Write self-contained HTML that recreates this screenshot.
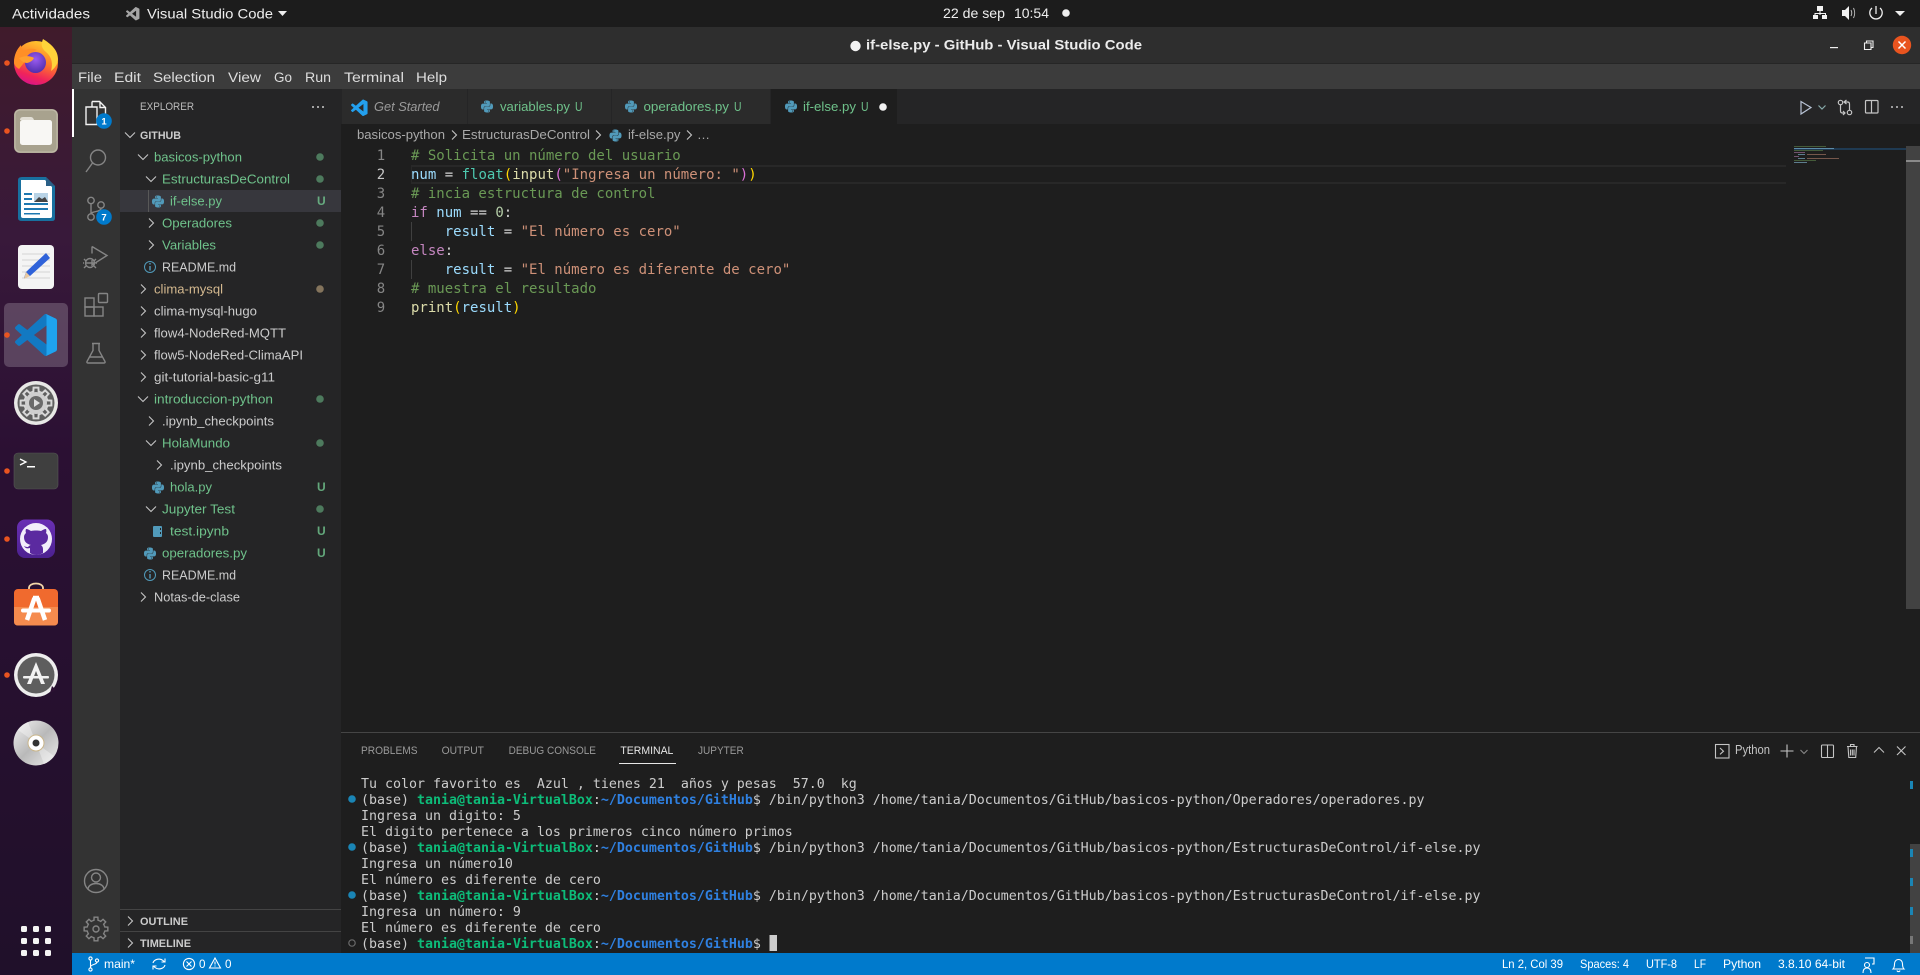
<!DOCTYPE html>
<html lang="es">
<head>
<meta charset="utf-8">
<title>if-else.py - GitHub - Visual Studio Code</title>
<style>
html,body{margin:0;padding:0;background:#1e1e1e;width:1920px;height:975px;overflow:hidden}
svg{display:block}
text{white-space:pre;font-family:"Liberation Sans",sans-serif}
.top{font-size:14px;fill:#eee}
.menu{font-size:13.5px;fill:#ddd}
.side{font-size:13px;fill:#ccc;transform:translateY(.6px)}
.g{fill:#6fc28b}
.m{fill:#d4b98f}
.hd{font-size:11px;font-weight:bold;fill:#ccc}
.u{font-size:12px;font-weight:bold;fill:#73c991;opacity:.8}
.tab{font-size:13px;fill:#6fc28b}
.bc{font-size:13px;fill:#a9a9a9}
.code{font-family:"DejaVu Sans Mono","Liberation Mono",monospace;font-size:14px;fill:#d4d4d4}
.ln{font-family:"DejaVu Sans Mono","Liberation Mono",monospace;font-size:14px;fill:#858585;text-anchor:middle}
.term{font-family:"DejaVu Sans Mono","Liberation Mono",monospace;font-size:13.29px;fill:#ccc}
.tg{font-weight:bold;fill:#0dbc79}
.tb{font-weight:bold;fill:#2f80e0}
.pt{font-size:11px;fill:#9a9a9a}
.st{font-size:12px;fill:#fff}
.ic{fill:none;stroke:#858585;stroke-width:1.4}
</style>
</head>
<body>
<svg xmlns="http://www.w3.org/2000/svg" width="1920" height="975" viewBox="0 0 1920 975">
<defs>
<linearGradient id="dock" x1="0" y1="0" x2="0" y2="1">
<stop offset="0" stop-color="#401b2b"/><stop offset=".22" stop-color="#38193a"/><stop offset=".45" stop-color="#2b1033"/><stop offset="1" stop-color="#20102a"/>
</linearGradient>
<linearGradient id="ffo" x1=".7" y1="0" x2=".35" y2="1"><stop offset="0" stop-color="#ffcf2e"/><stop offset=".45" stop-color="#ff7a2a"/><stop offset=".8" stop-color="#f0245a"/><stop offset="1" stop-color="#d9148a"/></linearGradient>
<radialGradient id="ffp" cx=".5" cy=".35" r=".7"><stop offset="0" stop-color="#9a5cf0"/><stop offset="1" stop-color="#4b2aa8"/></radialGradient>
<linearGradient id="ghb" x1="0" y1="0" x2="0" y2="1"><stop offset="0" stop-color="#6a2fb5"/><stop offset="1" stop-color="#4c2190"/></linearGradient>
<linearGradient id="cd" x1="0" y1="0" x2="1" y2="1"><stop offset="0" stop-color="#f2f2f2"/><stop offset=".5" stop-color="#b9b9b9"/><stop offset="1" stop-color="#eee"/></linearGradient>
<symbol id="cr" viewBox="0 0 10 12" width="10" height="12" overflow="visible"><path d="M3 1.5L7.5 6 3 10.5" fill="none" stroke="#c5c5c5" stroke-width="1.1"/></symbol>
<symbol id="cd2" viewBox="0 0 12 10" width="12" height="10" overflow="visible"><path d="M1 2.5L6 7.5 11 2.5" fill="none" stroke="#c5c5c5" stroke-width="1.1"/></symbol>
<symbol id="py" viewBox="0 0 24 24" width="12" height="13" overflow="visible"><path fill="#519aba" fill-rule="evenodd" d="M14.25.18l.9.2.73.26.59.3.45.32.34.34.25.34.16.33.1.3.04.26.02.2-.01.13V8.5l-.05.63-.13.55-.21.46-.26.38-.3.31-.33.25-.35.19-.35.14-.33.1-.3.07-.26.04-.21.02H8.77l-.69.05-.59.14-.5.22-.41.27-.33.32-.27.35-.2.36-.15.37-.1.35-.07.32-.04.27-.02.21v3.06H3.17l-.21-.03-.28-.07-.32-.12-.35-.18-.36-.26-.36-.36-.35-.46-.32-.59-.28-.73-.21-.88-.14-1.05-.05-1.23.06-1.22.16-1.04.24-.87.32-.71.36-.57.4-.44.42-.33.42-.24.4-.16.36-.1.32-.05.24-.01h.16l.06.01h8.16v-.83H6.18l-.01-2.75-.02-.37.05-.34.11-.31.17-.28.25-.26.31-.23.38-.2.44-.18.51-.15.58-.12.64-.1.71-.06.77-.04.84-.02 1.27.05zm-6.3 1.98l-.23.33-.08.41.08.41.23.34.33.22.41.09.41-.09.33-.22.23-.34.08-.41-.08-.41-.23-.33-.33-.22-.41-.09-.41.09zm13.09 3.95l.28.06.32.12.35.18.36.27.36.35.35.47.32.59.28.73.21.88.14 1.04.05 1.23-.06 1.23-.16 1.04-.24.86-.32.71-.36.57-.4.45-.42.33-.42.24-.4.16-.36.09-.32.05-.24.02-.16-.01h-8.22v.82h5.84l.01 2.76.02.36-.05.34-.11.31-.17.29-.25.25-.31.24-.38.2-.44.17-.51.15-.58.13-.64.09-.71.07-.77.04-.84.01-1.27-.04-1.07-.14-.9-.2-.73-.25-.59-.3-.45-.33-.34-.34-.25-.34-.16-.33-.1-.3-.04-.25-.02-.2.01-.13v-5.34l.05-.64.13-.54.21-.46.26-.38.3-.32.33-.24.35-.2.35-.14.33-.1.3-.06.26-.04.21-.02.13-.01h5.84l.69-.05.59-.14.5-.21.41-.28.33-.32.27-.35.2-.36.15-.36.1-.35.07-.32.04-.28.02-.21V6.07h2.09l.14.01zm-6.47 14.25l-.23.33-.08.41.08.41.23.33.33.23.41.08.41-.08.33-.23.23-.33.08-.41-.08-.41-.23-.33-.33-.23-.41-.08-.41.08z"/></symbol>
<path id="tooth" d="M-3.44-8.31L-2.02-8.77-1.88-11.85 1.88-11.85 2.02-8.77 3.44-8.31"/>
<g id="gear"><use href="#tooth"/><use href="#tooth" transform="rotate(45)"/><use href="#tooth" transform="rotate(90)"/><use href="#tooth" transform="rotate(135)"/><use href="#tooth" transform="rotate(180)"/><use href="#tooth" transform="rotate(225)"/><use href="#tooth" transform="rotate(270)"/><use href="#tooth" transform="rotate(315)"/></g>
<path id="vs" d="M23.15 2.587L18.21.21a1.494 1.494 0 0 0-1.705.29l-9.46 8.63-4.12-3.128a.999.999 0 0 0-1.276.057L.327 7.261A1 1 0 0 0 .326 8.74L3.899 12 .326 15.26a1 1 0 0 0 .001 1.479L1.65 17.94a.999.999 0 0 0 1.276.057l4.12-3.128 9.46 8.63a1.492 1.492 0 0 0 1.704.29l4.942-2.377A1.5 1.5 0 0 0 24 20.06V3.939a1.5 1.5 0 0 0-.85-1.352zm-5.146 14.861L10.826 12l7.178-5.448v10.896z"/>
</defs>

<!-- backgrounds -->
<rect width="1920" height="975" fill="#1e1e1e"/>
<rect x="0" y="0" width="1920" height="27" fill="#1c1c1c"/>
<rect x="0" y="27" width="72" height="948" fill="url(#dock)"/>
<rect x="72" y="27" width="1848" height="37" fill="#2e2e2e"/>
<rect x="72" y="63" width="1848" height="1" fill="#262626"/>
<rect x="72" y="64" width="1848" height="25" fill="#3c3c3c"/>
<rect x="72" y="89" width="48" height="864" fill="#333"/>
<rect x="120" y="89" width="221" height="864" fill="#252526"/>
<rect x="341" y="89" width="1579" height="35" fill="#252526"/>

<!-- top bar -->
<text class="top" x="12" y="18.500" textLength="78" lengthAdjust="spacingAndGlyphs">Actividades</text>
<use href="#vs" transform="translate(126 7) scale(.56)" fill="#a5a5a5"/>
<text class="top" x="147" y="18.500" textLength="126" lengthAdjust="spacingAndGlyphs">Visual Studio Code</text>
<path d="M278 11h9l-4.500 5z" fill="#eee"/>
<text class="top" x="943" y="18" textLength="62" lengthAdjust="spacingAndGlyphs">22 de sep</text>
<text class="top" x="1014" y="18" textLength="35" lengthAdjust="spacingAndGlyphs">10:54</text>
<circle cx="1066" cy="13" r="3.800" fill="#eee"/>
<g fill="#f2f2f2">
<rect x="1817" y="6" width="6" height="5"/><rect x="1813" y="15" width="5" height="4"/><rect x="1822" y="15" width="5" height="4"/>
<path d="M1819.500 11h1v2h5.500v2h-1v-1h-4.500v1h-1v-1h-4v1h-1v-2h5z"/>
<path d="M1842 10h3l4-4v14l-4-4h-3z"/>
</g>
<path d="M1851 10c1 2 1 4 0 6M1853.500 8c1.500 3 1.500 7 0 10" fill="none" stroke="#bbb" stroke-width="1"/>
<path d="M1872 8a6.200 6.200 0 1 0 8 0M1876 6v8" fill="none" stroke="#eee" stroke-width="1.300"/>
<path d="M1895 11h10l-5 5z" fill="#eee"/>

<!-- title bar -->
<circle cx="855.500" cy="46" r="5.200" fill="#f2f2f2"/>
<text x="866" y="49.500" font-size="14" font-weight="bold" fill="#ececec" textLength="276" lengthAdjust="spacingAndGlyphs">if-else.py - GitHub - Visual Studio Code</text>
<rect x="1830" y="47" width="8" height="1.200" fill="#eee"/>
<path d="M1864.500 43h6.500v6.500h-6.500z M1866.500 43v-2h6.500v6.500h-2" fill="none" stroke="#eee" stroke-width="1.100"/>
<circle cx="1902" cy="45" r="9.200" fill="#e9541f"/>
<path d="M1898.500 41.500l7 7M1905.500 41.500l-7 7" stroke="#fff" stroke-width="1.500"/>

<!-- menu -->
<text class="menu" x="78" y="82" textLength="24" lengthAdjust="spacingAndGlyphs">File</text>
<text class="menu" x="114" y="82" textLength="27" lengthAdjust="spacingAndGlyphs">Edit</text>
<text class="menu" x="153" y="82" textLength="62" lengthAdjust="spacingAndGlyphs">Selection</text>
<text class="menu" x="228" y="82" textLength="33" lengthAdjust="spacingAndGlyphs">View</text>
<text class="menu" x="274" y="82" textLength="18" lengthAdjust="spacingAndGlyphs">Go</text>
<text class="menu" x="305" y="82" textLength="26" lengthAdjust="spacingAndGlyphs">Run</text>
<text class="menu" x="344" y="82" textLength="60" lengthAdjust="spacingAndGlyphs">Terminal</text>
<text class="menu" x="416" y="82" textLength="31" lengthAdjust="spacingAndGlyphs">Help</text>

<!-- dock -->
<rect x="4" y="303" width="64" height="64" rx="5" fill="#fff" opacity=".2"/>
<g fill="#e95420">
<circle cx="7" cy="63" r="2.800"/><circle cx="7" cy="131" r="2.800"/><circle cx="7" cy="335" r="2.800"/><circle cx="7" cy="471" r="2.800"/><circle cx="7" cy="539" r="2.800"/><circle cx="7" cy="675" r="2.800"/>
</g>
<!-- firefox -->
<circle cx="36" cy="63" r="22" fill="url(#ffo)"/>
<path d="M43 39c-2 5-2 9 3 13 6 5 7 12 5 19 4-3 7-7 7-12 0-9-7-15-15-20z" fill="#ffd33a"/>
<path d="M14 62c0-7 3-13 7-17 0 3 1 5 3 6 4-3 9-3 13-1-5 2-9 4-10 9l-8 10c-3-2-5-4-5-7z" fill="#ff8f26"/>
<circle cx="35.500" cy="62.500" r="10.500" fill="url(#ffp)"/>
<path d="M19 58c5-2 10-3 15 0-1 2-3 4-7 5-3 0-6-2-8-5z" fill="#ffa02e"/>
<!-- files -->
<rect x="14" y="109" width="44" height="44" rx="6" fill="#a8a28e"/>
<rect x="15" y="110" width="42" height="42" rx="5" fill="none" stroke="#c2bcaa" stroke-width="1"/>
<path d="M20 120q0-3 3-3h8q2 0 3 3z" fill="#e2dfd6"/>
<rect x="20" y="120" width="32" height="25" rx="2.500" fill="#f8f7f4"/>
<!-- writer -->
<path d="M22 177h24l9 9v32q0 3-3 3H22q-4 0-4-3v-38q0-3 4-3z" fill="#18709f"/>
<path d="M21 180h24l7 7v29q0 2-2 2H23q-2 0-2-2z" fill="#fff"/>
<path d="M46 177l9 9h-9z" fill="#2a5f86"/>
<g fill="#1e78b0"><rect x="24" y="193" width="8" height="2"/><rect x="24" y="198" width="8" height="2"/><rect x="24" y="203" width="24" height="2"/><rect x="24" y="208" width="24" height="2"/><rect x="24" y="213" width="16" height="1.500"/></g>
<rect x="34" y="193" width="14" height="9" fill="#b8d3e6"/><path d="M34 202l5-5 3 2 3-2 3 5z" fill="#444"/>
<!-- text editor -->
<rect x="18" y="245" width="36" height="44" rx="4" fill="#f4f4f4"/>
<g stroke="#d5d5d5" stroke-width="1"><path d="M22 254h28M22 260h28M22 266h28M22 272h28M22 278h28"/></g>
<path d="M46 253l4 5-20 18-6 2 2-6z" fill="#2f62d9"/><path d="M26 272l4 4-6 3z" fill="#e9c9a0"/>
<!-- vscode -->
<g transform="translate(15 314) scale(1.750)">
<use href="#vs" fill="#1279c2"/>
<path d="M16.505.5a1.494 1.494 0 0 1 1.705-.29l4.94 2.377A1.5 1.5 0 0 1 24 3.939v16.12a1.5 1.5 0 0 1-.85 1.352l-4.942 2.378a1.492 1.492 0 0 1-1.704-.29c.9.9 1.5.5 1.5-.4V.9c0-.9-.6-1.3-1.500-.4z" fill="#1fa3ef"/>
</g>
<!-- settings -->
<circle cx="36" cy="403" r="22" fill="#e8e8e6"/>
<circle cx="36" cy="403" r="18.500" fill="#5f5f5f"/>
<g transform="translate(36 403) scale(1.300)" stroke="#d8d8d8" stroke-width="1.500"><use href="#gear" fill="none"/></g>
<circle cx="36" cy="403" r="11" fill="#cfcfcf"/><circle cx="36" cy="403" r="7" fill="#6a6a6a"/>
<path d="M34 399l6 4-6 4z" fill="#ddd"/>
<!-- terminal -->
<rect x="14" y="453" width="44" height="36" rx="4" fill="#3f3f3f" stroke="#555" stroke-width=".6"/>
<path d="M20 459l6 3-6 3" fill="none" stroke="#fff" stroke-width="1.300"/><rect x="27" y="466" width="8" height="1.500" fill="#fff"/>
<!-- github -->
<rect x="17" y="519.500" width="38" height="38.500" rx="8" fill="url(#ghb)"/>
<circle cx="36" cy="539" r="16" fill="#f2eefa"/>
<path d="M30 553v-5c-3 1-5 0-6-2 2 1 3 1 4 1 1-1 2-2 3-2-4-1-7-3-7-8 0-2 1-3 2-4-.5-1.500-.5-3 0-4 2 0 3 1 5 2 3-.7 7-.7 10 0 2-1 3-2 5-2 .5 1 .5 2.500 0 4 1 1 2 2 2 4 0 5-3 7-7 8 1 1 2 2 2 4v4c-2 1-4 2-6.500 2s-5-1-6.500-2z" fill="#5b2aa0"/>
<!-- app store -->
<path d="M29 590v-2c0-6 14-6 14 0v2" fill="none" stroke="#f3d6a8" stroke-width="1.800"/>
<rect x="14" y="589" width="44" height="36.500" rx="4" fill="#f06a2e"/>
<path d="M14 607h44v14.500q0 4-4 4H18q-4 0-4-4z" fill="#f58b4e"/>
<g stroke="#fff" fill="none"><path d="M34.500 598L27 620M37.500 598L45 620M33 598h6" stroke-width="4.500"/><path d="M23 610.500h26" stroke-width="4" stroke-linecap="round"/></g>
<!-- updater -->
<circle cx="36" cy="675" r="22" fill="#eee"/>
<circle cx="36" cy="675" r="18.500" fill="#5e5e5e"/>
<path d="M36 662l-9 22h4l5-13 5 13h4z" fill="#f2f2f2"/><rect x="23" y="676" width="26" height="2.500" rx="1" fill="#f2f2f2"/>
<path d="M52 686l4 4-6 3z" fill="#2c1033"/>
<!-- cd -->
<circle cx="36" cy="743" r="22.500" fill="url(#cd)"/>
<path d="M36 743L18 730a22 22 0 0 1 10-8zM36 743l18 13a22 22 0 0 1-10 8z" fill="#fff" opacity=".35"/>
<circle cx="36" cy="743" r="8" fill="#fff" stroke="#c9b58a" stroke-width="1"/><circle cx="36" cy="743" r="3.500" fill="#333"/>
<!-- grid -->
<g fill="#f4f4f4">
<rect x="21" y="926" width="6" height="6" rx="1.500"/><rect x="33" y="926" width="6" height="6" rx="1.500"/><rect x="45" y="926" width="6" height="6" rx="1.500"/>
<rect x="21" y="938" width="6" height="6" rx="1.500"/><rect x="33" y="938" width="6" height="6" rx="1.500"/><rect x="45" y="938" width="6" height="6" rx="1.500"/>
<rect x="21" y="950" width="6" height="6" rx="1.500"/><rect x="33" y="950" width="6" height="6" rx="1.500"/><rect x="45" y="950" width="6" height="6" rx="1.500"/>
</g>

<!-- activity bar -->
<rect x="72" y="89" width="2" height="48" fill="#fff"/>
<path d="M92 101.500h7.500l6 6v14.500h-5M92 101.500v5M100 102v5.500h5" fill="none" stroke="#f2f2f2" stroke-width="1.400"/>
<path d="M86 107h11v17.500h-11z" fill="none" stroke="#f2f2f2" stroke-width="1.400"/>
<circle cx="104" cy="121" r="7.800" fill="#007acc"/>
<text x="104" y="124.500" font-size="9.500" font-weight="bold" fill="#fff" text-anchor="middle">1</text>
<g class="ic">
<circle cx="98" cy="157.500" r="7.500"/><path d="M92.500 163L86 172"/>
<circle cx="91" cy="200.500" r="3.200"/><circle cx="91" cy="217" r="3.200"/><circle cx="101" cy="205" r="3.200"/><path d="M91 204v10M101 208.500c0 4-10 2-10 6"/>
<path d="M92 246.500L107 255.500 92 265v-5M92 246.500v7"/>
<circle cx="90" cy="263" r="4.500"/><path d="M84 259l2 2M96 259l-2 2M84 268l2-2M96 268l-2-2M84 263h-1M96 263h1M86 263h8"/>
<rect x="85" y="298" width="9" height="9"/><rect x="85" y="307" width="9" height="9"/><rect x="94" y="307" width="9" height="9"/><rect x="98.500" y="293.500" width="9" height="9" rx="1"/>
<path d="M92 343.500h8M93 343.500v7l-6 11q-.5 1.500 1 1.500h16q1.500 0 1-1.500l-6-11v-7M89.500 357h13"/>
<circle cx="96" cy="881" r="11.500"/><circle cx="96" cy="877.500" r="4.500"/><path d="M88 889.500c0-8 16-8 16 0"/>
<g transform="translate(96 929)"><use href="#gear"/><circle r="3"/></g>
</g>
<circle cx="104" cy="217" r="7.800" fill="#007acc"/>
<text x="104" y="220.500" font-size="9.500" font-weight="bold" fill="#fff" text-anchor="middle">7</text>

<!-- sidebar -->
<text x="140" y="110" font-size="11" fill="#bbb" textLength="54" lengthAdjust="spacingAndGlyphs">EXPLORER</text>
<g fill="#ccc"><circle cx="313" cy="107" r="1"/><circle cx="318" cy="107" r="1"/><circle cx="323" cy="107" r="1"/></g>
<use href="#cd2" x="124" y="130"/>
<text class="hd" x="140" y="139" textLength="41" lengthAdjust="spacingAndGlyphs">GITHUB</text>

<rect x="120" y="190" width="221" height="22" fill="#37373d"/>
<rect x="148" y="190" width="1" height="22" fill="#585858"/>

<use href="#cd2" x="137" y="152"/>
<text class="side g" x="154" y="161" textLength="88" lengthAdjust="spacingAndGlyphs">basicos-python</text>
<use href="#cd2" x="145" y="174"/>
<text class="side g" x="162" y="183" textLength="128" lengthAdjust="spacingAndGlyphs">EstructurasDeControl</text>
<use href="#py" x="152" y="195"/>
<text class="side g" x="170" y="205" textLength="52" lengthAdjust="spacingAndGlyphs">if-else.py</text>
<use href="#cr" x="146" y="217"/>
<text class="side g" x="162" y="227" textLength="70" lengthAdjust="spacingAndGlyphs">Operadores</text>
<use href="#cr" x="146" y="239"/>
<text class="side g" x="162" y="249" textLength="54" lengthAdjust="spacingAndGlyphs">Variables</text>
<circle cx="150" cy="267" r="5.500" fill="none" stroke="#519aba"/>
<rect x="149.300" y="266" width="1.400" height="4.500" fill="#519aba"/><rect x="149.300" y="263" width="1.400" height="1.500" fill="#519aba"/>
<text class="side" x="162" y="271" textLength="74" lengthAdjust="spacingAndGlyphs">README.md</text>
<use href="#cr" x="138" y="283"/>
<text class="side m" x="154" y="293" textLength="69" lengthAdjust="spacingAndGlyphs">clima-mysql</text>
<use href="#cr" x="138" y="305"/>
<text class="side" x="154" y="315" textLength="103" lengthAdjust="spacingAndGlyphs">clima-mysql-hugo</text>
<use href="#cr" x="138" y="327"/>
<text class="side" x="154" y="337" textLength="132" lengthAdjust="spacingAndGlyphs">flow4-NodeRed-MQTT</text>
<use href="#cr" x="138" y="349"/>
<text class="side" x="154" y="359" textLength="149" lengthAdjust="spacingAndGlyphs">flow5-NodeRed-ClimaAPI</text>
<use href="#cr" x="138" y="371"/>
<text class="side" x="154" y="381" textLength="121" lengthAdjust="spacingAndGlyphs">git-tutorial-basic-g11</text>
<use href="#cd2" x="137" y="394"/>
<text class="side g" x="154" y="403" textLength="119" lengthAdjust="spacingAndGlyphs">introduccion-python</text>
<use href="#cr" x="146" y="415"/>
<text class="side" x="162" y="425" textLength="112" lengthAdjust="spacingAndGlyphs">.ipynb_checkpoints</text>
<use href="#cd2" x="145" y="438"/>
<text class="side g" x="162" y="447" textLength="68" lengthAdjust="spacingAndGlyphs">HolaMundo</text>
<use href="#cr" x="154" y="459"/>
<text class="side" x="170" y="469" textLength="112" lengthAdjust="spacingAndGlyphs">.ipynb_checkpoints</text>
<use href="#py" x="152" y="481"/>
<text class="side g" x="170" y="491" textLength="42" lengthAdjust="spacingAndGlyphs">hola.py</text>
<use href="#cd2" x="145" y="504"/>
<text class="side g" x="162" y="513" textLength="73" lengthAdjust="spacingAndGlyphs">Jupyter Test</text>
<rect x="153" y="526" width="9" height="11" rx="1" fill="#519aba"/><rect x="160" y="528" width="1" height="2" fill="#252526"/><rect x="160" y="532" width="1" height="2" fill="#252526"/>
<text class="side g" x="170" y="535" textLength="59" lengthAdjust="spacingAndGlyphs">test.ipynb</text>
<use href="#py" x="144" y="547"/>
<text class="side g" x="162" y="557" textLength="85" lengthAdjust="spacingAndGlyphs">operadores.py</text>
<circle cx="150" cy="575" r="5.500" fill="none" stroke="#519aba"/>
<rect x="149.300" y="574" width="1.400" height="4.500" fill="#519aba"/><rect x="149.300" y="571" width="1.400" height="1.500" fill="#519aba"/>
<text class="side" x="162" y="579" textLength="74" lengthAdjust="spacingAndGlyphs">README.md</text>
<use href="#cr" x="138" y="591"/>
<text class="side" x="154" y="601" textLength="86" lengthAdjust="spacingAndGlyphs">Notas-de-clase</text>

<g fill="#4d7a5d">
<circle cx="320" cy="157" r="3.800"/><circle cx="320" cy="179" r="3.800"/><circle cx="320" cy="223" r="3.800"/><circle cx="320" cy="245" r="3.800"/><circle cx="320" cy="399" r="3.800"/><circle cx="320" cy="443" r="3.800"/><circle cx="320" cy="509" r="3.800"/>
</g>
<circle cx="320" cy="289" r="3.800" fill="#84745c"/>
<text class="u" x="317" y="205">U</text>
<text class="u" x="317" y="491">U</text>
<text class="u" x="317" y="535">U</text>
<text class="u" x="317" y="557">U</text>

<rect x="120" y="909" width="221" height="1" fill="#444"/>
<use href="#cr" x="125" y="915"/>
<text class="hd" x="140" y="925" textLength="48" lengthAdjust="spacingAndGlyphs">OUTLINE</text>
<rect x="120" y="931" width="221" height="1" fill="#444"/>
<use href="#cr" x="125" y="937"/>
<text class="hd" x="140" y="947" textLength="51" lengthAdjust="spacingAndGlyphs">TIMELINE</text>

<!-- tabs -->
<rect x="342" y="89" width="125" height="35" fill="#2b2b2b"/>
<rect x="468" y="89" width="143" height="35" fill="#2b2b2b"/>
<rect x="612" y="89" width="158" height="35" fill="#2b2b2b"/>
<rect x="771" y="89" width="126" height="35" fill="#1e1e1e"/>
<use href="#vs" transform="translate(351 99.500) scale(.69)" fill="#23a0ee"/>
<text x="374" y="111" font-size="13" font-style="italic" fill="#9a9a9a" textLength="65.500" lengthAdjust="spacingAndGlyphs">Get Started</text>
<use href="#py" x="481" y="100"/>
<text class="tab" x="500" y="111" textLength="70" lengthAdjust="spacingAndGlyphs">variables.py</text>
<text class="tab" x="575" y="111" font-size="12" textLength="7.500" lengthAdjust="spacingAndGlyphs">U</text>
<use href="#py" x="625" y="100"/>
<text class="tab" x="643.500" y="111" textLength="85.500" lengthAdjust="spacingAndGlyphs">operadores.py</text>
<text class="tab" x="734" y="111" font-size="12" textLength="7.500" lengthAdjust="spacingAndGlyphs">U</text>
<use href="#py" x="785" y="100"/>
<text class="tab" x="803" y="111" textLength="53" lengthAdjust="spacingAndGlyphs">if-else.py</text>
<text class="tab" x="861" y="111" font-size="12" textLength="7.500" lengthAdjust="spacingAndGlyphs">U</text>
<circle cx="883" cy="107" r="3.800" fill="#f2f2f2"/>

<!-- editor actions -->
<g fill="none" stroke="#c5c5c5" stroke-width="1.200">
<path d="M1801 101.500v12.500l10-6.500z" stroke="#b9c4d6"/>
<path d="M1818.500 105.500l3.500 3.500 3.500-3.500" stroke="#8aa"/>
<circle cx="1840.500" cy="102.500" r="2.200"/><circle cx="1849.500" cy="112.500" r="2.200"/>
<path d="M1840.500 105v6c0 1.500 1 2 2 2h2.500M1849.500 110v-6c0-1.500-1-2-2-2h-3M1846.500 100l-2.500 2 2.500 2M1843 111l2 2-2 2"/>
<rect x="1865.500" y="100.500" width="12.500" height="12.500" rx="1"/><path d="M1871.500 100.500v12.500"/>
</g>
<g fill="#c5c5c5"><circle cx="1892" cy="107" r="1"/><circle cx="1897" cy="107" r="1"/><circle cx="1902" cy="107" r="1"/></g>

<!-- breadcrumb -->
<text class="bc" x="357" y="139" textLength="88" lengthAdjust="spacingAndGlyphs">basicos-python</text>
<use href="#cr" x="449" y="129"/>
<text class="bc" x="462" y="139" textLength="128" lengthAdjust="spacingAndGlyphs">EstructurasDeControl</text>
<use href="#cr" x="593" y="129"/>
<use href="#py" x="609.500" y="129"/>
<text class="bc" x="628" y="139" textLength="52.500" lengthAdjust="spacingAndGlyphs">if-else.py</text>
<use href="#cr" x="684" y="129"/>
<text class="bc" x="697" y="139">…</text>

<!-- editor -->
<rect x="411" y="165" width="1375" height="2" fill="#282828"/>
<rect x="411" y="182" width="1375" height="2" fill="#282828"/>
<rect x="411" y="165" width="1" height="19" fill="#282828"/>
<rect x="411" y="222" width="1" height="19" fill="#404040"/>
<rect x="411" y="260" width="1" height="19" fill="#404040"/>
<text class="ln" x="381" y="160">1</text>
<text class="ln" x="381" y="179" style="fill:#c6c6c6">2</text>
<text class="ln" x="381" y="198">3</text>
<text class="ln" x="381" y="217">4</text>
<text class="ln" x="381" y="236">5</text>
<text class="ln" x="381" y="255">6</text>
<text class="ln" x="381" y="274">7</text>
<text class="ln" x="381" y="293">8</text>
<text class="ln" x="381" y="312">9</text>
<text class="code" x="411" y="160" style="fill:#6a9955"># Solicita un número del usuario</text>
<text class="code" x="411" y="179"><tspan style="fill:#9cdcfe">num</tspan> = <tspan style="fill:#4ec9b0">float</tspan><tspan style="fill:#ffd700">(</tspan><tspan style="fill:#dcdcaa">input</tspan><tspan style="fill:#da70d6">(</tspan><tspan style="fill:#ce9178">"Ingresa un número: "</tspan><tspan style="fill:#da70d6">)</tspan><tspan style="fill:#ffd700">)</tspan></text>
<text class="code" x="411" y="198" style="fill:#6a9955"># incia estructura de control</text>
<text class="code" x="411" y="217"><tspan style="fill:#c586c0">if</tspan> <tspan style="fill:#9cdcfe">num</tspan> == <tspan style="fill:#b5cea8">0</tspan>:</text>
<text class="code" x="411" y="236">    <tspan style="fill:#9cdcfe">result</tspan> = <tspan style="fill:#ce9178">"El número es cero"</tspan></text>
<text class="code" x="411" y="255"><tspan style="fill:#c586c0">else</tspan>:</text>
<text class="code" x="411" y="274">    <tspan style="fill:#9cdcfe">result</tspan> = <tspan style="fill:#ce9178">"El número es diferente de cero"</tspan></text>
<text class="code" x="411" y="293" style="fill:#6a9955"># muestra el resultado</text>
<text class="code" x="411" y="312"><tspan style="fill:#dcdcaa">print</tspan><tspan style="fill:#ffd700">(</tspan><tspan style="fill:#9cdcfe">result</tspan><tspan style="fill:#ffd700">)</tspan></text>

<!-- minimap -->
<rect x="1794" y="148" width="112" height="2" fill="#1f3a52"/>
<g opacity=".5">
<rect x="1794" y="146" width="32" height="1" fill="#6a9955"/>
<rect x="1794" y="148" width="40" height="1" fill="#9cdcfe"/>
<rect x="1794" y="150" width="29" height="1" fill="#6a9955"/>
<rect x="1794" y="152" width="11" height="1" fill="#c586c0"/>
<rect x="1798" y="154" width="7" height="1" fill="#9cdcfe"/><rect x="1807" y="154" width="19" height="1" fill="#ce9178"/>
<rect x="1794" y="156" width="5" height="1" fill="#c586c0"/>
<rect x="1798" y="158" width="7" height="1" fill="#9cdcfe"/><rect x="1807" y="158" width="32" height="1" fill="#ce9178"/>
<rect x="1794" y="160" width="22" height="1" fill="#6a9955"/>
<rect x="1794" y="162" width="13" height="1" fill="#9cdcfe"/>
</g>
<rect x="1906" y="146" width="14" height="463" fill="#424242"/>
<rect x="1906" y="160" width="14" height="2" fill="#8a8a8a"/>

<!-- panel -->
<rect x="341" y="732" width="1579" height="1" fill="#454545"/>
<text class="pt" x="361" y="754" textLength="56.500" lengthAdjust="spacingAndGlyphs">PROBLEMS</text>
<text class="pt" x="441.600" y="754" textLength="42.400" lengthAdjust="spacingAndGlyphs">OUTPUT</text>
<text class="pt" x="508.600" y="754" textLength="87.400" lengthAdjust="spacingAndGlyphs">DEBUG CONSOLE</text>
<text class="pt" x="620.400" y="754" textLength="53" lengthAdjust="spacingAndGlyphs" style="fill:#e7e7e7">TERMINAL</text>
<rect x="619" y="763" width="57" height="1" fill="#e7e7e7"/>
<text class="pt" x="698" y="754" textLength="45.700" lengthAdjust="spacingAndGlyphs">JUPYTER</text>

<g fill="none" stroke="#c5c5c5" stroke-width="1.100">
<rect x="1715.500" y="744.500" width="13.500" height="13.500"/>
<path d="M1720 748l3.500 3.200-3.500 3.200"/>
<path d="M1780.500 751h13M1787 744.500v13"/>
<path d="M1800.500 750l3.500 3.500 3.500-3.500" stroke="#888"/>
<rect x="1821.500" y="745" width="12" height="12.500" rx="1"/><path d="M1827.500 745v12.500"/>
<path d="M1847 746.500h10.500M1850.500 746.500v-2h3.500v2M1848 746.500l.8 11h6.900l.8-11M1850.500 749.500v6M1852.300 749.500v6M1854 749.500v6"/>
<path d="M1874 752.500l5-5 5 5" stroke-width="1"/>
<path d="M1897 746.500l8.500 8.500M1905.500 746.500l-8.500 8.500"/>
</g>
<text x="1735" y="754" font-size="12.500" fill="#c5c5c5" textLength="35" lengthAdjust="spacingAndGlyphs">Python</text>

<!-- terminal -->
<text class="term" x="361" y="788">Tu color favorito es  Azul , tienes 21  años y pesas  57.0  kg</text>
<circle cx="352" cy="799" r="3.800" fill="#1a85b5"/>
<text class="term" x="361" y="804">(base) <tspan class="tg">tania@tania-VirtualBox</tspan>:<tspan class="tb">~/Documentos/GitHub</tspan>$ /bin/python3 /home/tania/Documentos/GitHub/basicos-python/Operadores/operadores.py</text>
<text class="term" x="361" y="820">Ingresa un digito: 5</text>
<text class="term" x="361" y="836">El digito pertenece a los primeros cinco número primos</text>
<circle cx="352" cy="847" r="3.800" fill="#1a85b5"/>
<text class="term" x="361" y="852">(base) <tspan class="tg">tania@tania-VirtualBox</tspan>:<tspan class="tb">~/Documentos/GitHub</tspan>$ /bin/python3 /home/tania/Documentos/GitHub/basicos-python/EstructurasDeControl/if-else.py</text>
<text class="term" x="361" y="868">Ingresa un número10</text>
<text class="term" x="361" y="884">El número es diferente de cero</text>
<circle cx="352" cy="895" r="3.800" fill="#1a85b5"/>
<text class="term" x="361" y="900">(base) <tspan class="tg">tania@tania-VirtualBox</tspan>:<tspan class="tb">~/Documentos/GitHub</tspan>$ /bin/python3 /home/tania/Documentos/GitHub/basicos-python/EstructurasDeControl/if-else.py</text>
<text class="term" x="361" y="916">Ingresa un número: 9</text>
<text class="term" x="361" y="932">El número es diferente de cero</text>
<circle cx="352" cy="943" r="3.200" fill="none" stroke="#6a6a6a" stroke-width="1.200"/>
<text class="term" x="361" y="948">(base) <tspan class="tg">tania@tania-VirtualBox</tspan>:<tspan class="tb">~/Documentos/GitHub</tspan>$ </text>
<rect x="769.500" y="935" width="7.500" height="16" fill="#ccc"/>

<rect x="1910" y="844" width="10" height="109" fill="#424242"/>
<g fill="#1a85b5"><rect x="1910" y="781" width="3" height="8"/><rect x="1910" y="849" width="3" height="8"/><rect x="1910" y="878" width="3" height="8"/><rect x="1910" y="907" width="3" height="8"/></g>
<rect x="1910" y="936" width="3" height="8" fill="#777"/>

<!-- status bar -->
<rect x="72" y="953" width="1848" height="22" fill="#007acc"/>
<g fill="none" stroke="#fff" stroke-width="1.100">
<circle cx="90.500" cy="958.500" r="1.600"/><circle cx="90.500" cy="969.500" r="1.600"/><circle cx="97" cy="960.500" r="1.600"/>
<path d="M90.500 960v8M97 962c0 3-6.500 2-6.500 5"/>
<path d="M153 963a6 5 0 0 1 10-2.500l1.500 1.500M165 965a6 5 0 0 1-10 2.500l-1.500-1.500"/>
<path d="M165 958.500v3.500h-3.500M153 969.500v-3.500h3.500"/>
<circle cx="189" cy="964" r="5.600"/><path d="M186.500 961.500l5 5M191.500 961.500l-5 5"/>
<path d="M215 958l5.500 10h-11z"/>
<path d="M215 961.500v3M215 965.500v1"/>
<path d="M1863 973c0-4 2-5 4-5s4 1 4 5M1867 967.500a2.500 2.500 0 1 0 0-5 2.500 2.500 0 0 0 0 5zM1865 958h9v6h-2"/>
<path d="M1893 969h11c-1.500-1.500-1.500-3-1.500-5 0-2.500-1.500-4.500-4-4.500s-4 2-4 4.500c0 2 0 3.500-1.500 5zM1897 970.500c.3 1.500 2.700 1.500 3 0"/>
</g>
<text class="st" x="104" y="968" textLength="31" lengthAdjust="spacingAndGlyphs">main*</text>
<text class="st" x="199" y="968" textLength="6.500" lengthAdjust="spacingAndGlyphs">0</text>
<text class="st" x="225" y="968" textLength="6.500" lengthAdjust="spacingAndGlyphs">0</text>
<text class="st" x="1502" y="968" textLength="61" lengthAdjust="spacingAndGlyphs">Ln 2, Col 39</text>
<text class="st" x="1580" y="968" textLength="49" lengthAdjust="spacingAndGlyphs">Spaces: 4</text>
<text class="st" x="1646" y="968" textLength="31" lengthAdjust="spacingAndGlyphs">UTF-8</text>
<text class="st" x="1694" y="968" textLength="12" lengthAdjust="spacingAndGlyphs">LF</text>
<text class="st" x="1723" y="968" textLength="38" lengthAdjust="spacingAndGlyphs">Python</text>
<text class="st" x="1778" y="968" textLength="67" lengthAdjust="spacingAndGlyphs">3.8.10 64-bit</text>
</svg>
</body>
</html>
